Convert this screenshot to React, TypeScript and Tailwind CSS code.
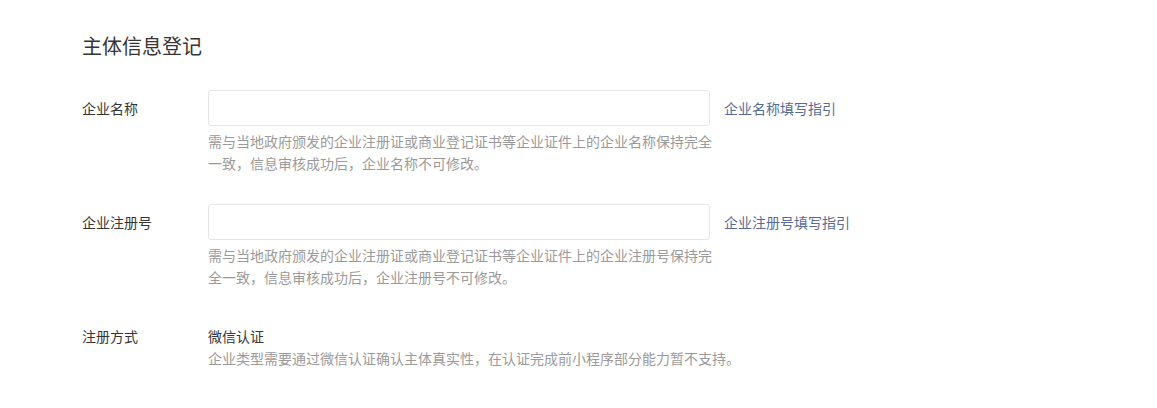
const font = { fontFamily: '"Noto Sans CJK SC", "Noto Sans", sans-serif' };

const fields = [
  {
    label: "企业名称",
    link: "企业名称填写指引",
    hint: "需与当地政府颁发的企业注册证或商业登记证书等企业证件上的企业名称保持完全一致，信息审核成功后，企业名称不可修改。",
  },
  {
    label: "企业注册号",
    link: "企业注册号填写指引",
    hint: "需与当地政府颁发的企业注册证或商业登记证书等企业证件上的企业注册号保持完全一致，信息审核成功后，企业注册号不可修改。",
  },
];

export default function App() {
  return (
    <div className="min-h-[408px] w-full bg-white pl-[82px] pt-[32px] text-[#353535]" style={font}>
      <h2 className="text-[20px] leading-[28px] font-normal">主体信息登记</h2>

      <div className="mt-[30px] flex flex-col gap-[30px]">
        {fields.map((f) => (
          <div key={f.label} className="flex">
            <label className="w-[126px] shrink-0 text-[14px] leading-[36px]">{f.label}</label>
            <div className="flex flex-col">
              <div className="flex items-center">
                <input
                  type="text"
                  className="h-[36px] w-[502px] rounded-[3px] border border-[#e6e6e6] bg-white px-3 text-[14px] outline-none"
                />
                <a href="#" className="ml-[14px] text-[14px] leading-[36px] text-[#576b95]">
                  {f.link}
                </a>
              </div>
              <p className="mt-[4px] w-[510px] text-[14px] leading-[22px] text-[#9a9a9a]">{f.hint}</p>
            </div>
          </div>
        ))}

        <div className="flex pt-[7px]">
          <label className="w-[126px] shrink-0 text-[14px] leading-[22px]">注册方式</label>
          <div className="flex flex-col">
            <span className="text-[14px] leading-[22px]">微信认证</span>
            <p className="whitespace-nowrap text-[14px] leading-[22px] text-[#9a9a9a]">
              企业类型需要通过微信认证确认主体真实性，在认证完成前小程序部分能力暂不支持。
            </p>
          </div>
        </div>
      </div>
    </div>
  );
}
